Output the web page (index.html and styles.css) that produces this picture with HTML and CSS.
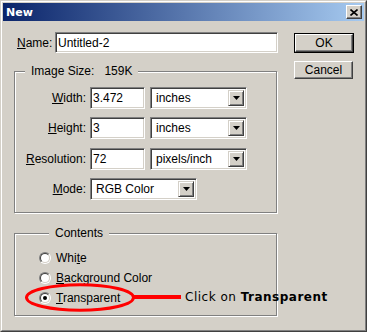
FILE: index.html
```html
<!DOCTYPE html>
<html>
<head>
    <title>New</title>
    <link rel="stylesheet" href="styles.css">
</head>
<body>
    <div class="window">
        <div class="frame">
            <div class="titlebar">
                <span class="title">New</span>
                <span class="close-btn">
                    <svg width="8" height="7" viewBox="0 0 8 7"><path d="M0.5 0.5l7 6M7.5 0.5l-7 6" stroke="#000" stroke-width="1.6"/></svg>
                </span>
            </div>

            <div class="content">
                <div class="left">
                    <div class="name-row">
                        <label class="name-label"><u>N</u>ame:</label>
                        <div class="field name-field">Untitled-2</div>
                    </div>

                    <fieldset class="group size-group">
                        <legend>Image Size:<span class="size-val">159K</span></legend>
                        <div class="rows">
                            <div class="row">
                                <label><u>W</u>idth:</label>
                                <div class="field num">3.472</div>
                                <div class="field select">inches<span class="drop"><svg width="7" height="4" viewBox="0 0 7 4"><path d="M0 0h7l-3.5 4z"/></svg></span></div>
                            </div>
                            <div class="row">
                                <label><u>H</u>eight:</label>
                                <div class="field num">3</div>
                                <div class="field select">inches<span class="drop"><svg width="7" height="4" viewBox="0 0 7 4"><path d="M0 0h7l-3.5 4z"/></svg></span></div>
                            </div>
                            <div class="row">
                                <label><u>R</u>esolution:</label>
                                <div class="field num">72</div>
                                <div class="field select">pixels/inch<span class="drop"><svg width="7" height="4" viewBox="0 0 7 4"><path d="M0 0h7l-3.5 4z"/></svg></span></div>
                            </div>
                            <div class="row">
                                <label><u>M</u>ode:</label>
                                <div class="field select mode">RGB Color<span class="drop"><svg width="7" height="4" viewBox="0 0 7 4"><path d="M0 0h7l-3.5 4z"/></svg></span></div>
                            </div>
                        </div>
                    </fieldset>

                    <fieldset class="group contents-group">
                        <legend>Contents</legend>
                        <div class="radios">
                            <div class="radio-row"><span class="radio"><span class="radio-in"></span></span><span>Whi<u>t</u>e</span></div>
                            <div class="radio-row"><span class="radio"><span class="radio-in"></span></span><span><u>B</u>ackground Color</span></div>
                            <div class="radio-row"><span class="radio"><span class="radio-in"><span class="radio-dot"></span></span></span><span><u>T</u>ransparent</span></div>
                        </div>
                    </fieldset>
                </div>

                <div class="right">
                    <div class="btn default"><span class="btn-face">OK</span></div>
                    <div class="btn cancel"><span class="btn-face">Cancel</span></div>
                </div>
            </div>
        </div>

        <!-- tutorial annotation drawn over the dialog -->
        <svg class="marks" width="367" height="332">
            <ellipse cx="80" cy="297.5" rx="53.5" ry="12.8" fill="none" stroke="#ff0000" stroke-width="3"/>
            <line x1="133" y1="297" x2="181" y2="297" stroke="#ff0000" stroke-width="4"/>
        </svg>
        <div class="callout">Click on <b>Transparent</b></div>
    </div>
</body>
</html>
```

FILE: styles.css
```css
body {
    margin: 0;
    font: 12px "Liberation Sans", Arial, sans-serif;
    color: #000;
    background: #d4d0c8;
}
.window {
    position: relative;
    width: 367px;
    height: 332px;
    box-sizing: border-box;
    border: 1px solid;
    border-color: #d4d0c8 #404040 #404040 #d4d0c8;
    background: #d4d0c8;
}
.frame {
    height: 100%;
    box-sizing: border-box;
    border: 1px solid;
    border-color: #fff #808080 #808080 #fff;
    padding: 1px;
}
.titlebar {
    height: 18px;
    display: flex;
    align-items: center;
    justify-content: space-between;
    padding: 0 2px 0 3px;
    background: linear-gradient(to right, #0a246a, #a6caf0);
}
.title {
    font: bold 11px "DejaVu Sans", sans-serif;
    color: #fff;
}
.close-btn {
    width: 16px;
    height: 14px;
    box-sizing: border-box;
    border: 1px solid;
    border-color: #fff #404040 #404040 #fff;
    box-shadow: inset -1px -1px #808080;
    background: #d4d0c8;
    display: flex;
    align-items: center;
    justify-content: center;
}
.content {
    display: flex;
    padding: 11px 0 0 11px;
}
.left {
    width: 264px;
}
.name-row {
    display: flex;
    align-items: center;
    height: 21px;
}
.name-label {
    width: 41px;
    padding-left: 3px;
    box-sizing: border-box;
}
.field {
    box-sizing: border-box;
    height: 21px;
    display: flex;
    align-items: center;
    background: #fff;
    border: 1px solid;
    border-color: #808080 #fff #fff #808080;
    box-shadow: inset 1px 1px #404040, inset -1px -1px #d4d0c8;
    padding: 0 2px;
    white-space: nowrap;
}
.name-field {
    width: 223px;
}
.group {
    width: 263px;
    min-width: 0;
    box-sizing: border-box;
    margin: 12px 0 0;
    padding: 9px 0 12px;
    border: 1px solid #808080;
    box-shadow: inset 1px 1px #fff, 1px 1px #fff;
}
.group legend {
    margin-left: 10px;
    padding: 0 6px;
    line-height: 13px;
    background: #d4d0c8;
}
.size-val {
    margin-left: 10px;
}
.rows {
    display: flex;
    flex-direction: column;
    gap: 8.4px;
}
.row {
    display: flex;
    align-items: center;
}
.row label {
    width: 75px;
    padding-right: 4px;
    box-sizing: border-box;
    text-align: right;
}
.row .field {
    height: 22px;
}
.num {
    width: 55px;
}
.select {
    width: 97px;
    margin-left: 5px;
    padding: 2px 2px 2px 5px;
}
.select.mode {
    width: 107px;
    margin-left: 0;
}
.drop {
    margin-left: auto;
    width: 16px;
    height: 100%;
    box-sizing: border-box;
    border: 1px solid;
    border-color: #d4d0c8 #404040 #404040 #d4d0c8;
    box-shadow: inset 1px 1px #fff, inset -1px -1px #808080;
    background: #d4d0c8;
    display: flex;
    align-items: center;
    justify-content: center;
}
.contents-group {
    margin-top: 14px;
    padding: 8px 0 7px 24px;
}
.radio-row {
    display: flex;
    align-items: center;
    gap: 5px;
    height: 20px;
}
.radio {
    width: 12px;
    height: 12px;
    box-sizing: border-box;
    border-radius: 50%;
    border: 1px solid;
    border-color: #808080 #fff #fff #808080;
}
.radio-in {
    display: flex;
    align-items: center;
    justify-content: center;
    width: 10px;
    height: 10px;
    box-sizing: border-box;
    border-radius: 50%;
    border: 1px solid;
    border-color: #404040 #d4d0c8 #d4d0c8 #404040;
    background: #fff;
}
.radio-dot {
    width: 4px;
    height: 4px;
    border-radius: 50%;
    background: #000;
}
.right {
    margin-left: 16px;
    padding-top: 1px;
    display: flex;
    flex-direction: column;
    gap: 8px;
}
.btn {
    box-sizing: border-box;
    display: flex;
}
.btn-face {
    flex: 1;
    display: flex;
    align-items: center;
    justify-content: center;
    border: 1px solid;
    border-color: #fff #404040 #404040 #fff;
    box-shadow: inset -1px -1px #808080;
}
.btn.default {
    width: 60px;
    height: 20px;
    border: 1px solid #000;
}
.btn.cancel {
    width: 59px;
    height: 18px;
}
.marks {
    position: absolute;
    left: -1px;
    top: -1px;
    pointer-events: none;
}
.callout {
    position: absolute;
    left: 184px;
    top: 289px;
    font: 12px/14px "DejaVu Sans", sans-serif;
    letter-spacing: 0.5px;
}
```
